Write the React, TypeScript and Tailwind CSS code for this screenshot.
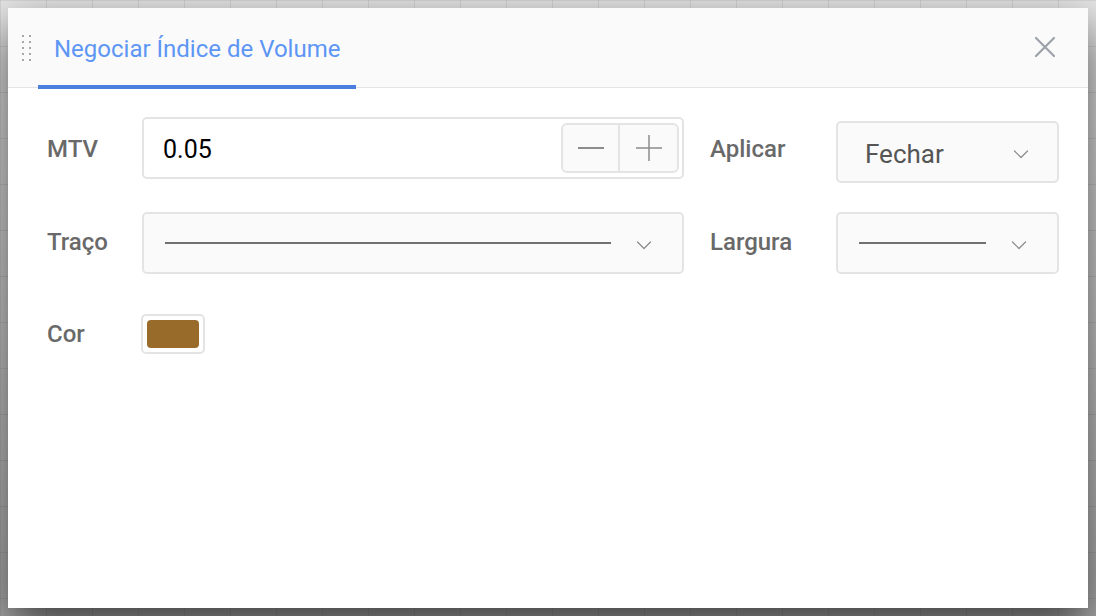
import React from "react";

const Chevron = () => (
  <svg width="16" height="10" viewBox="0 0 16 10" fill="none">
    <path d="M1.5 2 L8 8.5 L14.5 2" stroke="#8a8a8a" strokeWidth="1.2" strokeLinecap="round" strokeLinejoin="round" />
  </svg>
);

export default function App() {
  return (
    <div
      className="w-[1096px] h-[616px] overflow-hidden p-2 bg-[linear-gradient(to_right,rgba(0,0,0,0.07)_1px,transparent_1px),linear-gradient(to_bottom,rgba(0,0,0,0.07)_1px,transparent_1px),linear-gradient(to_bottom,#e6e6e6,#cfcfcf_50%,#b0b0b0)] bg-[size:46px_46px,46px_46px,100%_100%]"
      style={{ fontFamily: "Roboto, 'Liberation Sans', sans-serif" }}
    >
      <div className="w-full h-full bg-white flex flex-col shadow-[0_20px_45px_rgba(0,0,0,0.65)]">
        {/* header */}
        <div className="h-[80px] shrink-0 bg-[#fafafa] border-b border-[#e3e3e3] flex items-end relative">
          <div className="absolute left-[14px] top-[27px] grid grid-cols-2 gap-x-[5px] gap-y-[4px]">
            {Array.from({ length: 10 }).map((_, i) => (
              <div key={i} className="w-[2px] h-[2px] bg-[#a8a8a8]" />
            ))}
          </div>
          <div className="ml-[30px] -mb-[2px] h-full flex items-center px-[16px] border-b-[4px] border-[#4a7fe0] text-[#5d96f4] text-[24px] pt-[2px]">
            Negociar Índice de Volume
          </div>
          <div className="absolute right-[31px] top-[27px]">
            <svg width="24" height="24" viewBox="0 0 24 24" fill="none">
              <path d="M3 3 L21 21 M21 3 L3 21" stroke="#9ca2a8" strokeWidth="2.2" strokeLinecap="round" />
            </svg>
          </div>
        </div>

        {/* body */}
        <div className="pl-[39px] pr-[29px] pt-[29px] flex flex-col">
          {/* row 1 */}
          <div className="flex items-start">
            <div className="w-[95px] h-[62px] flex items-center text-[24px] font-medium text-[#696969] pt-[2px]">MTV</div>
            <div className="w-[542px] h-[62px] border-2 border-[#e4e4e4] rounded-[5px] flex items-center pl-[19px] pr-[3px]">
              <span className="flex-1 text-[25px] text-black pt-[3px]">0.05</span>
              <div className="flex h-[50px] border-2 border-[#e4e4e4] rounded-[6px] bg-[#fafafa] overflow-hidden">
                <div className="w-[57px] flex items-center justify-center border-r-2 border-[#e4e4e4]">
                  <div className="w-[26px] h-[1.5px] bg-[#8c8c8c]" />
                </div>
                <div className="w-[57px] flex items-center justify-center">
                  <svg width="26" height="26" viewBox="0 0 26 26">
                    <path d="M0 13 H26 M13 0 V26" stroke="#8c8c8c" strokeWidth="1.5" />
                  </svg>
                </div>
              </div>
            </div>
            <div className="ml-[26px] w-[126px] h-[62px] flex items-center text-[24px] font-medium text-[#696969] pt-[2px]">Aplicar</div>
            <div className="mt-[4px] w-[223px] h-[62px] border-2 border-[#e4e4e4] rounded-[5px] bg-[#fafafa] flex items-center pl-[27px] pr-[28px]">
              <span className="flex-1 text-[26px] text-[#555] pt-[4px]">Fechar</span>
              <span className="pt-[4px]"><Chevron /></span>
            </div>
          </div>

          {/* row 2 */}
          <div className="flex items-start mt-[29px]">
            <div className="w-[95px] h-[62px] flex items-center text-[24px] font-medium text-[#696969] pb-[2px]">Traço</div>
            <div className="w-[542px] h-[62px] border-2 border-[#e4e4e4] rounded-[5px] bg-[#fafafa] flex items-center pl-[21px] pr-[30px]">
              <div className="w-[446px] h-[2px] bg-[#707070]" />
              <span className="ml-auto pt-[4px]"><Chevron /></span>
            </div>
            <div className="ml-[26px] w-[126px] h-[62px] flex items-center text-[24px] font-medium text-[#696969] pb-[2px]">Largura</div>
            <div className="w-[223px] h-[62px] border-2 border-[#e4e4e4] rounded-[5px] bg-[#fafafa] flex items-center pl-[21px] pr-[30px]">
              <div className="w-[127px] h-[2px] bg-[#707070]" />
              <span className="ml-auto pt-[4px]"><Chevron /></span>
            </div>
          </div>

          {/* row 3 */}
          <div className="flex items-center mt-[40px]">
            <div className="w-[94px] text-[24px] font-medium text-[#696969]">Cor</div>
            <div className="w-[64px] h-[40px] border-2 border-[#e4e4e4] rounded-[5px] p-[4px]">
              <div className="w-full h-full rounded-[4px] bg-[#996b2b]" />
            </div>
          </div>
        </div>
      </div>
    </div>
  );
}
